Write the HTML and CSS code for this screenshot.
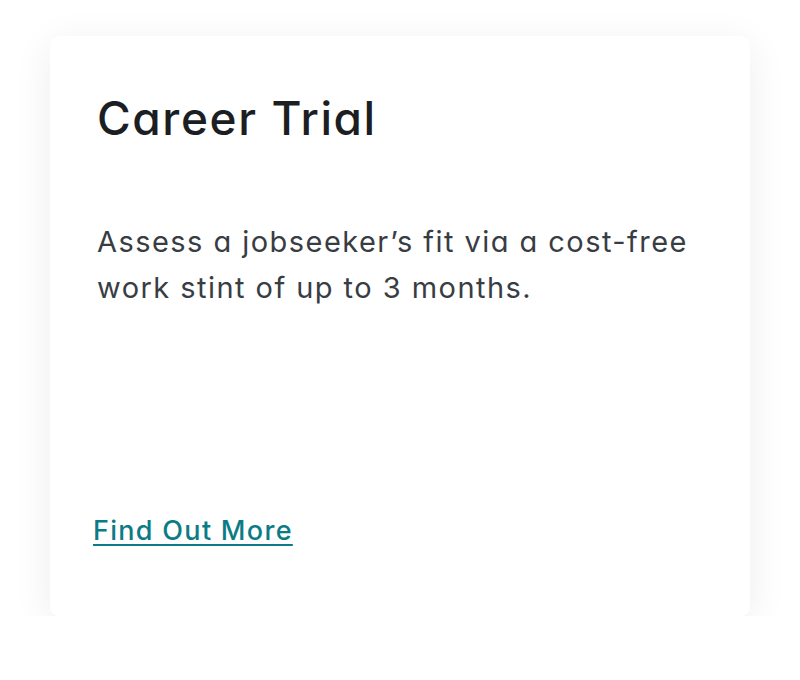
FILE: index.html
```html
<!DOCTYPE html>
<html lang="en">
<head>
<meta charset="utf-8">
<link rel="stylesheet" href="styles.css">
</head>
<body>
<div class="page">
  <div class="card">
    <h2 class="title">Career Trial</h2>
    <p class="desc">Assess a jobseeker’s fit via a cost-free work stint of up to 3 months.</p>
    <a class="link" href="#">Find Out More</a>
  </div>
</div>
</body>
</html>
```
FILE: styles.css
```css
html, body {
  margin: 0;
  padding: 0;
  background: #ffffff;
}
body {
  font-family: "Inter", "Open Sans", sans-serif;
  font-feature-settings: "cv11" 1, "liga" 0;
  font-variant-ligatures: none;
}
.page {
  padding: 36px 50px 0 50px;
}
.card {
  box-sizing: border-box;
  width: 700px;
  height: 580px;
  background: #ffffff;
  border-radius: 9px;
  box-shadow: 0 8px 38px rgba(0, 0, 0, 0.075);
  padding: 52px 40px 68px 47px;
  display: flex;
  flex-direction: column;
  align-items: flex-start;
}
.title {
  margin: 0;
  font-size: 46px;
  font-weight: 500;
  line-height: 60px;
  letter-spacing: 1.6px;
  color: #1b1e22;
}
.desc {
  margin: 71px 0 0 0;
  font-size: 29px;
  line-height: 46px;
  letter-spacing: 1.45px;
  color: #383d44;
  font-weight: 400;
}
.link {
  margin-top: auto;
  margin-left: -4px;
  font-size: 27px;
  line-height: 34px;
  font-weight: 500;
  letter-spacing: 1.3px;
  color: #0b7c86;
  text-decoration: underline;
  text-decoration-thickness: 2px;
  text-underline-offset: 4px;
}
```
